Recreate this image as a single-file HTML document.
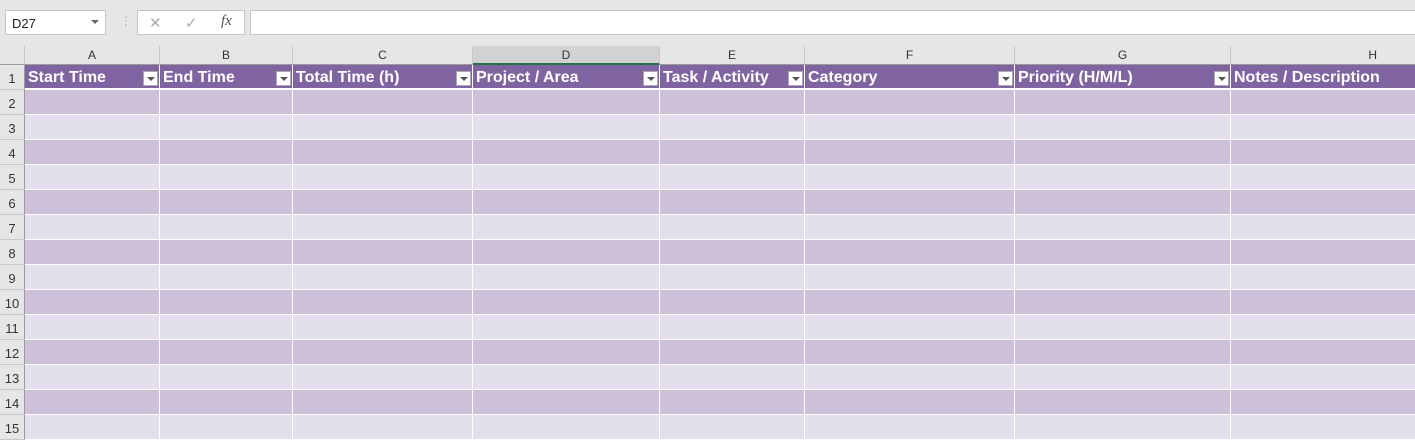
<!DOCTYPE html>
<html><head><meta charset="utf-8"><style>
body{margin:0;width:1415px;height:430px;overflow:hidden;background:#e6e6e6;font-family:"Liberation Sans",sans-serif;position:relative}
.box{position:absolute;background:#fff;border:1px solid #c6c6c6;box-sizing:border-box}
table{position:absolute;left:0;top:46px;border-collapse:separate;border-spacing:0;table-layout:fixed;width:1430px}
td{padding:0;box-sizing:border-box;overflow:hidden;white-space:nowrap}
.ch td{height:19px;background:#e6e6e6;color:#333;font-size:12px;text-align:center;border-right:1px solid #c8c8c8;border-bottom:1px solid #9b9b9b}
.ch td.sel{background:#d2d2d2;border-bottom:2px solid #217346}
td.rh{background:#e6e6e6;color:#333;font-size:13px;text-align:center;border-right:1px solid #9b9b9b;border-bottom:1px solid #c8c8c8;padding-top:2px}
.h td.c{height:25px;background:#8064a2;color:#fff;font-weight:bold;font-size:16px;padding-left:3px;padding-top:3px;border-right:1px solid #fff;border-bottom:2px solid #fff;position:relative}
.h td.rh{height:25px}
.dd{position:absolute;right:1px;top:6px;width:15px;height:15px;background:#fff;border:1px solid #aaa;box-sizing:border-box}
.dd:after{content:"";position:absolute;left:3px;top:5px;border-left:4px solid transparent;border-right:4px solid transparent;border-top:4px solid #555}
tr.d td{height:25px}
tr.d td.c{border-right:1px solid #fff;border-bottom:1px solid #fff}
tr.o td.c{background:#ccc0da}
tr.e td.c{background:#e4dfec}
</style></head><body>
<div class="box" style="left:5px;top:10px;width:101px;height:25px;font-size:13px;padding:5px 6px;color:#222">D27<span style="position:absolute;right:6px;top:9px;border-left:4px solid transparent;border-right:4px solid transparent;border-top:4px solid #666"></span></div>
<div style="position:absolute;left:120px;top:14px;color:#aaa;font-size:12px">⋮</div>
<div class="box" style="left:137px;top:10px;width:108px;height:25px;color:#aaa;font-size:15px"><span style="position:absolute;left:11px;top:3px">✕</span><span style="position:absolute;left:47px;top:3px">✓</span><span style="position:absolute;left:83px;top:2px;color:#555;font-style:italic;font-family:'Liberation Serif',serif">fx</span></div>
<div class="box" style="left:250px;top:10px;width:1170px;height:25px"></div>
<table>
<colgroup><col style="width:25px"><col style="width:135px"><col style="width:133px"><col style="width:180px"><col style="width:187px"><col style="width:145px"><col style="width:210px"><col style="width:216px"><col style="width:199px"></colgroup>
<tr class="ch"><td style="background:#e6e6e6"></td><td>A</td><td>B</td><td>C</td><td class="sel">D</td><td>E</td><td>F</td><td>G</td><td style="text-align:right;padding-right:52px">H</td></tr>
<tr class="h"><td class="rh">1</td><td class="c">Start Time<span class="dd"></span></td><td class="c">End Time<span class="dd"></span></td><td class="c">Total Time (h)<span class="dd"></span></td><td class="c">Project / Area<span class="dd"></span></td><td class="c">Task / Activity<span class="dd"></span></td><td class="c">Category<span class="dd"></span></td><td class="c">Priority (H/M/L)<span class="dd"></span></td><td class="c">Notes / Description</td></tr>
<tr class="d o"><td class="rh">2</td><td class="c"></td><td class="c"></td><td class="c"></td><td class="c"></td><td class="c"></td><td class="c"></td><td class="c"></td><td class="c"></td></tr>
<tr class="d e"><td class="rh">3</td><td class="c"></td><td class="c"></td><td class="c"></td><td class="c"></td><td class="c"></td><td class="c"></td><td class="c"></td><td class="c"></td></tr>
<tr class="d o"><td class="rh">4</td><td class="c"></td><td class="c"></td><td class="c"></td><td class="c"></td><td class="c"></td><td class="c"></td><td class="c"></td><td class="c"></td></tr>
<tr class="d e"><td class="rh">5</td><td class="c"></td><td class="c"></td><td class="c"></td><td class="c"></td><td class="c"></td><td class="c"></td><td class="c"></td><td class="c"></td></tr>
<tr class="d o"><td class="rh">6</td><td class="c"></td><td class="c"></td><td class="c"></td><td class="c"></td><td class="c"></td><td class="c"></td><td class="c"></td><td class="c"></td></tr>
<tr class="d e"><td class="rh">7</td><td class="c"></td><td class="c"></td><td class="c"></td><td class="c"></td><td class="c"></td><td class="c"></td><td class="c"></td><td class="c"></td></tr>
<tr class="d o"><td class="rh">8</td><td class="c"></td><td class="c"></td><td class="c"></td><td class="c"></td><td class="c"></td><td class="c"></td><td class="c"></td><td class="c"></td></tr>
<tr class="d e"><td class="rh">9</td><td class="c"></td><td class="c"></td><td class="c"></td><td class="c"></td><td class="c"></td><td class="c"></td><td class="c"></td><td class="c"></td></tr>
<tr class="d o"><td class="rh">10</td><td class="c"></td><td class="c"></td><td class="c"></td><td class="c"></td><td class="c"></td><td class="c"></td><td class="c"></td><td class="c"></td></tr>
<tr class="d e"><td class="rh">11</td><td class="c"></td><td class="c"></td><td class="c"></td><td class="c"></td><td class="c"></td><td class="c"></td><td class="c"></td><td class="c"></td></tr>
<tr class="d o"><td class="rh">12</td><td class="c"></td><td class="c"></td><td class="c"></td><td class="c"></td><td class="c"></td><td class="c"></td><td class="c"></td><td class="c"></td></tr>
<tr class="d e"><td class="rh">13</td><td class="c"></td><td class="c"></td><td class="c"></td><td class="c"></td><td class="c"></td><td class="c"></td><td class="c"></td><td class="c"></td></tr>
<tr class="d o"><td class="rh">14</td><td class="c"></td><td class="c"></td><td class="c"></td><td class="c"></td><td class="c"></td><td class="c"></td><td class="c"></td><td class="c"></td></tr>
<tr class="d e"><td class="rh">15</td><td class="c"></td><td class="c"></td><td class="c"></td><td class="c"></td><td class="c"></td><td class="c"></td><td class="c"></td><td class="c"></td></tr>
</table>
</body></html>
